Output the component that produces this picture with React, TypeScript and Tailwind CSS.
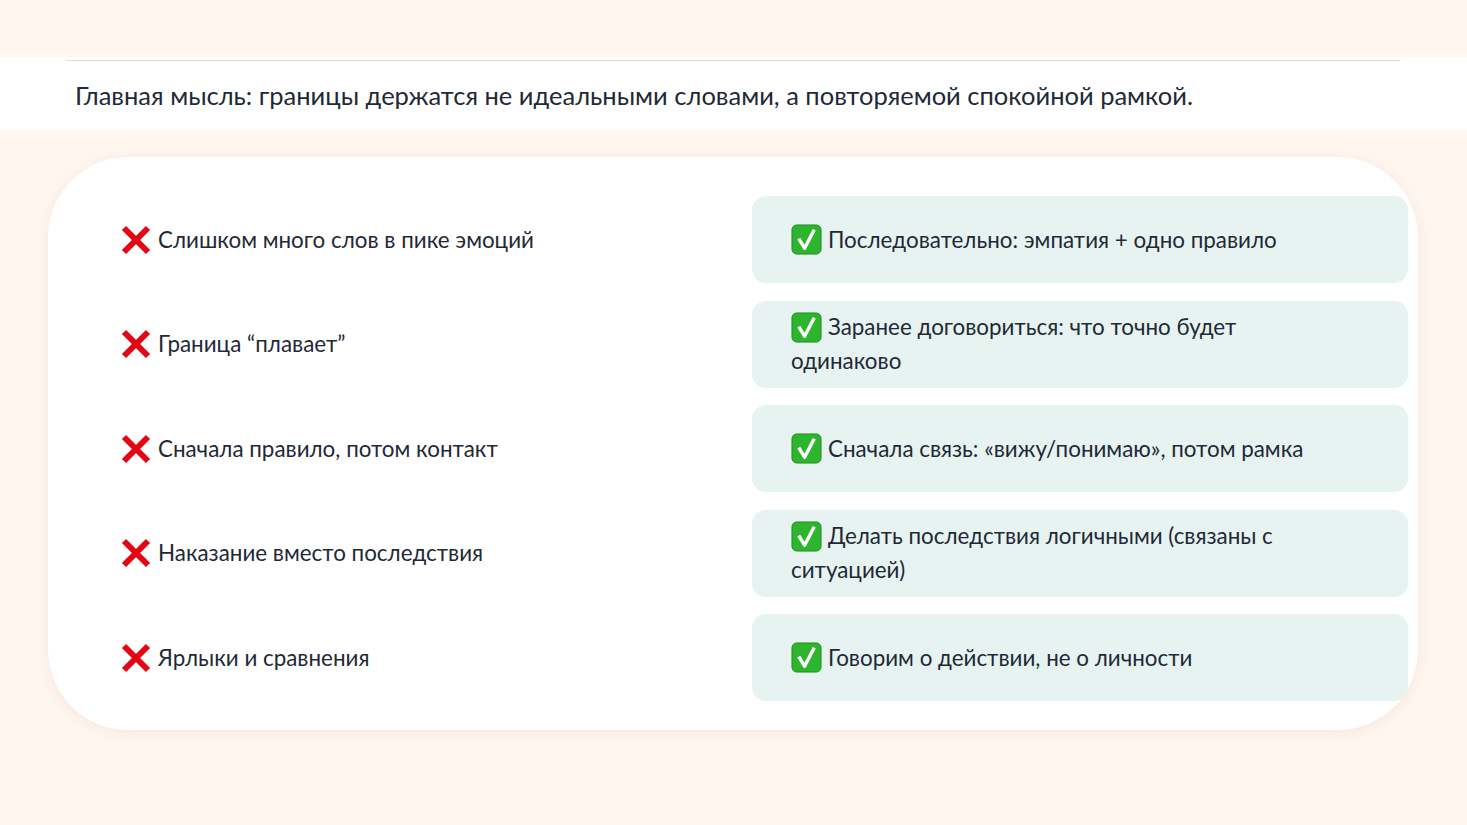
import React from "react";

const X = () => (
  <svg width="32" height="32" viewBox="0 0 32 32" className="shrink-0">
    <path d="M4 4 L28 28 M28 4 L4 28" stroke="#e30613" strokeWidth="6" strokeLinecap="butt" />
  </svg>
);
const Check = () => (
  <svg width="31" height="31" viewBox="0 0 32 32" className="shrink-0">
    <rect x="1" y="1" width="30" height="30" rx="5" fill="#2db52d" stroke="#1f8a1f" />
    <path d="M8 15 L14 25 L24 6" stroke="#fff" strokeWidth="3.5" fill="none" strokeLinejoin="round" />
  </svg>
);

const bad = [
  "Слишком много слов в пике эмоций",
  "Граница “плавает”",
  "Сначала правило, потом контакт",
  "Наказание вместо последствия",
  "Ярлыки и сравнения",
];
const good = [
  "Последовательно: эмпатия + одно правило",
  "Заранее договориться: что точно будет одинаково",
  "Сначала связь: «вижу/понимаю», потом рамка",
  "Делать последствия логичными (связаны с ситуацией)",
  "Говорим о действии, не о личности",
];

export default function App() {
  return (
    <div className="w-[1467px] h-[825px] bg-[#fff6f0] text-[#1f2937] flex flex-col" style={{ fontFamily: "Lato, 'Open Sans', sans-serif" }}>
      <div className="h-[57px]" />
      <div className="bg-white h-[73px] flex flex-col">
        <div className="mx-[66px] mt-[3px] h-px bg-[#f3d6c3] w-[1334px]" />
        <div className="pl-[75px] pt-[19px] text-[25.5px] leading-[30px]">Главная мысль: границы держатся не идеальными словами, а повторяемой спокойной рамкой.</div>
      </div>
      <div className="ml-[48px] mt-[27px] w-[1370px] h-[573px] bg-white rounded-[80px] shadow-[0_2px_12px_rgba(230,200,180,0.35)] pt-[39px] pl-[72px] pr-[10px] grid grid-cols-[632px_656px] content-start gap-y-[17.5px]">
        {bad.map((b, i) => (
          <React.Fragment key={i}>
            <div className="h-[87px] flex items-center gap-[6px] text-[22.4px]">
              <X />
              <span>{b}</span>
            </div>
            <div className="h-[87px] bg-[#e6f3f0] rounded-[14px] pl-[39px] pr-[100px] flex items-center text-[22.4px] leading-[34px]">
              <div>
                <span className="inline-block align-middle mr-[6px] -mt-[4px]"><Check /></span>
                {good[i]}
              </div>
            </div>
          </React.Fragment>
        ))}
      </div>
    </div>
  );
}
